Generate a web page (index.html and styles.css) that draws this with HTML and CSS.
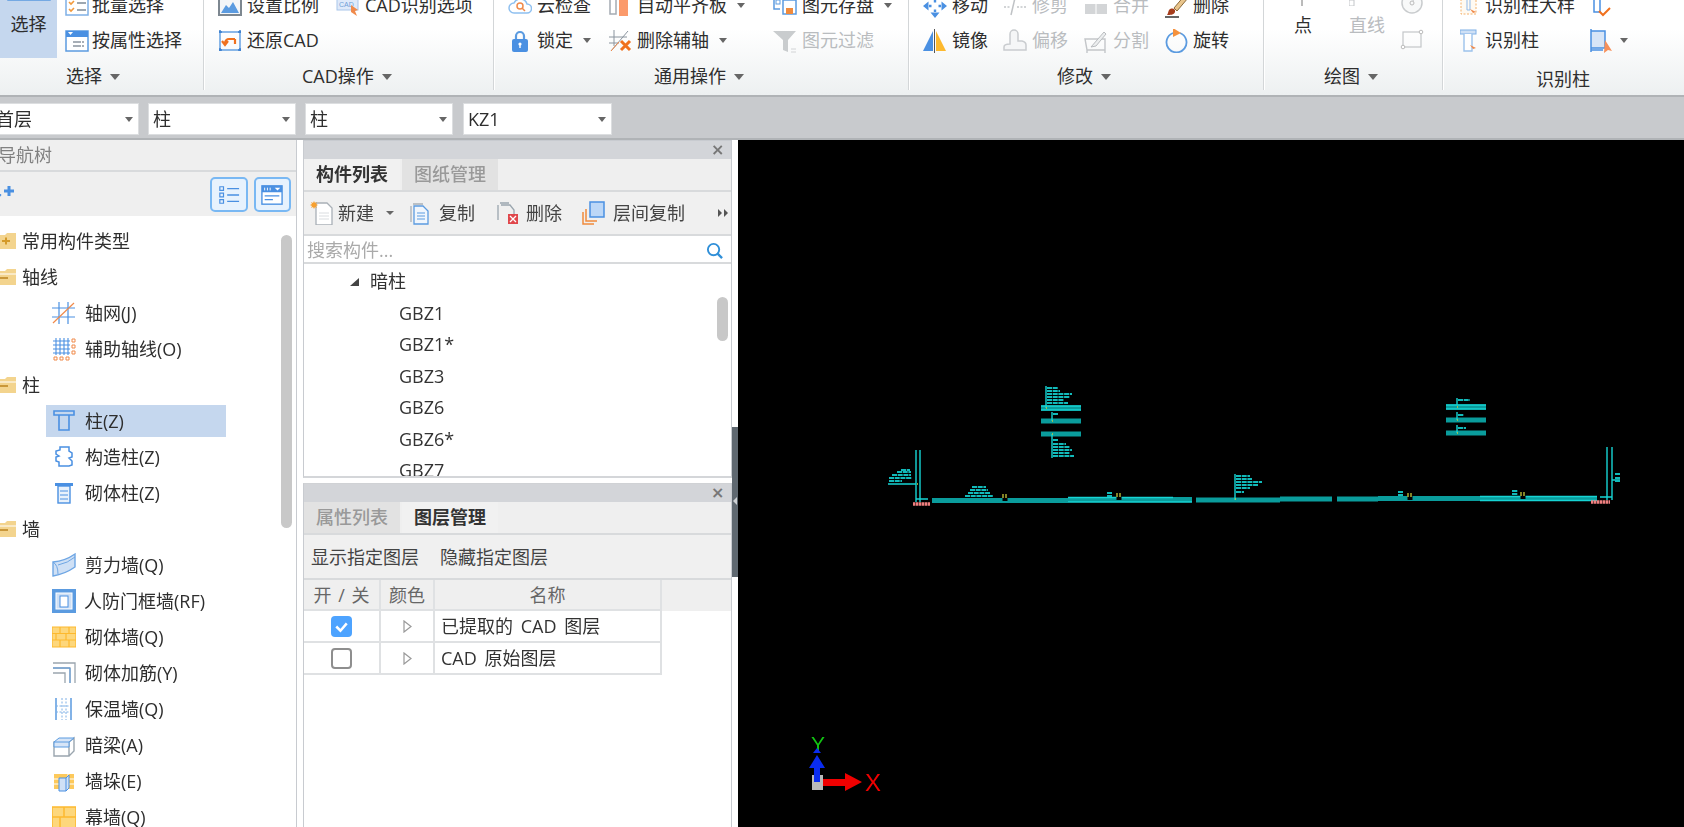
FILE: index.html
```html
<!DOCTYPE html>
<html lang="zh-CN">
<head>
<meta charset="utf-8">
<title>构件绘制</title>
<link rel="stylesheet" href="styles.css">
</head>
<body>
<div class="app">
  <header class="ribbon">
    <div class="ribbon-inner">
      <section class="group g1">
        <div class="body">
          <div class="bigbtn">
            <svg class="bigicon" viewBox="0 0 44 15"><rect x="1" y="-6" width="42" height="18" fill="#fff" stroke="#5b9be0" stroke-width="1.5"/><path d="M6 12V8h8v4M30 12V8" stroke="#f5a04b" stroke-width="2" fill="none"/></svg>
            <span>选择</span>
          </div>
          <div class="stack">
            <div class="item"><svg class="i" viewBox="0 0 24 24"><rect x="1" y="3" width="22" height="18" fill="#fff" stroke="#7fb0e6" stroke-width="1.5"/><path d="M4 8l2 2 3-3M4 15l2 2 3-3" stroke="#f39a3c" stroke-width="1.6" fill="none"/><path d="M12 9h9M12 16h9" stroke="#7d8a96" stroke-width="1.5"/></svg><span>批量选择</span></div>
            <div class="item"><svg class="i" viewBox="0 0 24 24"><rect x="1" y="2" width="22" height="20" fill="#fff" stroke="#5b9be0" stroke-width="1.5"/><rect x="1" y="2" width="22" height="6" fill="#4a90e2"/><path d="M3 3h5l-2.500 3z" fill="#fff"/><path d="M8 13h11M8 17h11" stroke="#8a949e" stroke-width="1.400" stroke-dasharray="8 1"/></svg><span>按属性选择</span></div>
          </div>
        </div>
        <div class="glabel"><span>选择</span><i class="caret"></i></div>
      </section>

      <section class="group g2">
        <div class="body grid2">
          <div class="item"><svg class="i" viewBox="0 0 24 24"><rect x="1" y="3" width="22" height="18" fill="#f4f6f8" stroke="#7d8790" stroke-width="2"/><path d="M3 19l5-8 3 3 4-6 6 11z" fill="#5b9be0"/></svg><span>设置比例</span></div>
          <div class="item cad"><svg class="i" viewBox="0 0 24 24"><rect x="1" y="3" width="21" height="13" fill="#dfeafa" stroke="#a9c6ea"/><text x="3" y="13" class="tiny">CAD</text><path d="M15 11l7 5-3 1 2 5-6-4z" fill="#f08a4b"/></svg><span>CAD识别选项</span></div>
          <div class="item"><svg class="i" viewBox="0 0 24 24"><rect x="2" y="3" width="20" height="18" fill="none" stroke="#5b9be0" stroke-width="1.400"/><path d="M1 3h3M20 3h3M1 21h3M20 21h3M2 1v3M22 1v3M2 19v3M22 19v3" stroke="#3c7fce" stroke-width="1.500"/><path d="M17 10h-6a4 4 0 0 0-4 4v1M4 12l3 4 3-4M17 10v5" stroke="#f0711e" stroke-width="2.200" fill="none"/></svg><span>还原CAD</span></div>
        </div>
        <div class="glabel"><span>CAD操作</span><i class="caret"></i></div>
      </section>

      <section class="group g3">
        <div class="body grid3">
          <div class="item"><svg class="i" viewBox="0 0 24 24"><path d="M6 19a5 5 0 0 1 0-10 7 7 0 0 1 13 1 4.500 4.500 0 0 1 0 9z" fill="#fff" stroke="#8fc0f0" stroke-width="1.500"/><circle cx="12" cy="12" r="3" fill="none" stroke="#f08a4b" stroke-width="1.500"/><path d="M14 14l3 3" stroke="#f08a4b" stroke-width="1.500"/></svg><span>云检查</span></div>
          <div class="item"><svg class="i" viewBox="0 0 24 24"><rect x="2" y="0" width="6" height="20" fill="#fff" stroke="#a4abb2" stroke-width="1.500"/><rect x="11" y="0" width="9" height="22" fill="#fb9a6b"/></svg><span>自动平齐板</span><i class="caret sm"></i></div>
          <div class="item"><svg class="i" viewBox="0 0 24 24"><path d="M1 0v15h6M1 0h10" stroke="#5b9be0" stroke-width="1.500" fill="none"/><rect x="3" y="6" width="4" height="4" fill="none" stroke="#5b9be0"/><rect x="10" y="6" width="13" height="14" fill="#fff" stroke="#5b9be0" stroke-width="1.500"/><rect x="13" y="14" width="7" height="6" fill="#f08a3c"/></svg><span>图元存盘</span><i class="caret sm"></i></div>
          <div class="item"><svg class="i" viewBox="0 0 24 24"><path d="M8 11V7a4 4 0 0 1 8 0v4" fill="none" stroke="#5b9be0" stroke-width="2.200"/><rect x="4" y="10" width="16" height="13" rx="2" fill="#4a90e2"/><circle cx="12" cy="15" r="1.600" fill="#fff"/><path d="M11.300 15h1.400v4h-1.400z" fill="#fff"/></svg><span>锁定</span><i class="caret sm"></i></div>
          <div class="item"><svg class="i" viewBox="0 0 24 24"><path d="M6 1v16M1 8h18M1 14h10M3 22L20 2" stroke="#8a949e" fill="none"/><path d="M3 22l8-9" stroke="#f08a4b"/><path d="M13 12l9 9M22 12l-9 9" stroke="#f0711e" stroke-width="3"/></svg><span>删除辅轴</span><i class="caret sm"></i></div>
          <div class="item off"><svg class="i" viewBox="0 0 24 24"><path d="M0 2h23l-8 9v12l-5-2V11z" fill="#c9ccce"/><path d="M18 20h5M18 23h5" stroke="#d2d4d6"/></svg><span>图元过滤</span></div>
        </div>
        <div class="glabel"><span>通用操作</span><i class="caret"></i></div>
      </section>

      <section class="group g4">
        <div class="body grid4">
          <div class="item"><svg class="i" viewBox="0 0 24 24"><path d="M12 0l4.500 5.500h-9zM12 24l-4.500-5.500h9zM0 12l5.500-4.500v9zM24 12l-5.500 4.500v-9z" fill="#4a90e2"/><path d="M12 6v2.500M12 15.500V18M6 12h2.500M15.500 12H18" stroke="#4a90e2" stroke-width="2.400"/></svg><span>移动</span></div>
          <div class="item off"><svg class="i" viewBox="0 0 24 24"><path d="M1 13h7M14 13h10" stroke="#c3c6c9" stroke-dasharray="2 1.500" stroke-width="1.500"/><path d="M8 21L12 4" stroke="#bfc2c5" stroke-width="1.500"/></svg><span>修剪</span></div>
          <div class="item off"><svg class="i" viewBox="0 0 24 24"><rect x="1" y="10" width="22" height="10" fill="#d3d5d7"/><path d="M12 10v10" stroke="#fff"/><rect x="6" y="2" width="12" height="4" fill="#dcdee0"/></svg><span>合并</span></div>
          <div class="item"><svg class="i" viewBox="0 0 24 24"><path d="M10 14L21 1l3 3-11 13z" fill="#e9c58c" stroke="#8b6a3a"/><path d="M5 16c3-3 7-1 6 2-1 3-5 3-8 3 1-1 1-3 2-5z" fill="#a63d1c"/><path d="M1 23h14" stroke="#333" stroke-width="1.500"/></svg><span>删除</span></div>
          <div class="item"><svg class="i" viewBox="0 0 24 24"><path d="M10 2L0 22h10z" fill="#4a90e2"/><path d="M13 2l10 20H13z" fill="#fdb92e"/><path d="M11.500 0v24" stroke="#555"/></svg><span>镜像</span></div>
          <div class="item off"><svg class="i" viewBox="0 0 24 24"><path d="M7 15V5a4 4 0 0 1 8 0v7h4q4 1 4 4v5H1v-3q0-3 6-3z" fill="#f5f6f7" stroke="#c9cccf" stroke-width="1.500"/></svg><span>偏移</span></div>
          <div class="item off"><svg class="i" viewBox="0 0 24 24"><path d="M1 10h20v11H3zM3 21v3M21 21v3" fill="none" stroke="#c3c6c9" stroke-width="1.400"/><path d="M7 18L20 3l2 2-10 12z" fill="#eceeef" stroke="#b9bcbf"/></svg><span>分割</span></div>
          <div class="item"><svg class="i" viewBox="0 0 24 24"><path d="M9 4a10 10 0 1 0 7 0" fill="none" stroke="#5b9be0" stroke-width="1.800"/><path d="M9 -1l8 5-8 4z" fill="#f5923e"/></svg><span>旋转</span></div>
        </div>
        <div class="glabel"><span>修改</span><i class="caret"></i></div>
      </section>

      <section class="group g5">
        <div class="body grid5">
          <div class="drawcol"><svg class="ticksvg" viewBox="0 0 24 18"><path d="M8 12v6" stroke="#777"/></svg><span>点</span></div>
          <div class="drawcol off"><svg class="ticksvg" viewBox="0 0 24 18"><rect x="0" y="12" width="5" height="6" fill="none" stroke="#c3c6c9"/></svg><span>直线</span></div>
          <div class="drawicons">
            <svg class="i" viewBox="0 0 24 24"><circle cx="12" cy="10" r="10" fill="#f8f9f9" stroke="#c9ccce" stroke-width="1.500"/><circle cx="12" cy="10" r="2" fill="none" stroke="#bbb"/><path d="M13 8l2-5" stroke="#c3c6c9"/></svg>
            <svg class="i" viewBox="0 0 24 24"><rect x="3" y="4" width="18" height="15" fill="none" stroke="#c3c6c9" stroke-width="1.200"/><circle cx="21" cy="4" r="1.800" fill="#fff" stroke="#bbb"/><circle cx="3" cy="19" r="1.800" fill="#fff" stroke="#bbb"/></svg>
          </div>
        </div>
        <div class="glabel"><span>绘图</span><i class="caret"></i></div>
      </section>

      <section class="group g6">
        <div class="body grid6">
          <div class="item"><svg class="i" viewBox="0 0 24 24"><rect x="1" y="0" width="15" height="20" fill="#fffaf2" stroke="#f4b26c" stroke-dasharray="2 1.500"/><path d="M5 3h7M7 3v13h3V3" stroke="#8fb9ea" fill="none"/><path d="M10 15l6 3-3 1z" fill="#f08a4b"/></svg><span>识别柱大样</span></div>
          <div class="item"><svg class="i" viewBox="0 0 24 24"><path d="M1 0v3h14V0M4 3v15h6V3" fill="none" stroke="#4a90e2" stroke-width="1.500"/><path d="M9 17l4 4 7-7" fill="none" stroke="#f0711e" stroke-width="2"/></svg></div>
          <div class="item"><svg class="i" viewBox="0 0 24 24"><rect x="0" y="1" width="16" height="4" fill="#cfe0f5" stroke="#7fb0e6"/><path d="M4 5v17h8V5" fill="#fff" stroke="#9cc2ec" stroke-width="1.400"/><path d="M10 16l6 3-3 1z" fill="#f08a4b"/></svg><span>识别柱</span></div>
          <div class="item"><svg class="i" viewBox="0 0 24 24"><path d="M1 0v23M1 2h14v17H1M1 21h12" fill="#d7e5f7" stroke="#4a90e2" stroke-width="1.500"/><path d="M15 11l7 11-4-1-4 3z" fill="#f7905a"/></svg><i class="caret sm"></i></div>
        </div>
        <div class="glabel"><span>识别柱</span></div>
      </section>
    </div>
  </header>

  <div class="combos">
    <div class="combo first"><span>首层</span><i class="caret sm"></i></div>
    <div class="combo"><span>柱</span><i class="caret sm"></i></div>
    <div class="combo"><span>柱</span><i class="caret sm"></i></div>
    <div class="combo"><span>KZ1</span><i class="caret sm"></i></div>
  </div>

  <main class="main">
    <aside class="nav">
      <div class="nav-title"><span>导航树</span></div>
      <div class="nav-tools">
        <svg class="spark" viewBox="0 0 22 16"><path d="M6 6l3.500 4L6 14l-3.500-4z" fill="#4a90e2"/><path d="M17 1v10M12 6h10" stroke="#4a90e2" stroke-width="3"/></svg>
        <div class="navbtn"><svg class="navic" viewBox="0 0 24 24"><path d="M2 3h4v4H2zM2 10h4v4H2zM2 17h4v4H2z" fill="none" stroke="#4a90e2" stroke-width="1.300"/><path d="M10 5h13M10 12h13M10 19h13" stroke="#4a90e2" stroke-width="1.400"/></svg></div>
        <div class="navbtn"><svg class="navic" viewBox="0 0 24 24"><rect x="1" y="2" width="22" height="20" fill="#fff" stroke="#4a90e2" stroke-width="1.500"/><rect x="1" y="2" width="22" height="7" fill="#4a90e2"/><path d="M4 4v3M7 4v3M10 4v3" stroke="#fff"/><path d="M15 4h6l-3 3z" fill="#fff"/><path d="M4 13h16M4 17h9" stroke="#4a90e2" stroke-width="1.500"/></svg></div>
      </div>
      <div class="tree">
        <div class="folder"><svg class="fold" viewBox="0 0 18 18"><path d="M0 3h7l2-2h9v16H0z" fill="#f3d48e"/><path d="M4 9h8M8 5.500v7" stroke="#d49a2a" stroke-width="2"/></svg><span>常用构件类型</span></div>
        <div class="folder"><svg class="fold" viewBox="0 0 18 18"><path d="M0 3h7l2-2h9v16H0z" fill="#f3d48e"/><path d="M0 6h18" stroke="#fff"/><path d="M2 10h8" stroke="#c9973a" stroke-width="2"/></svg><span>轴线</span></div>
        <div class="leaf"><svg class="i" viewBox="0 0 24 24"><path d="M7 1v22M16 1v22M0 7h23M0 16h23" stroke="#4a90e2" stroke-width="1.200"/><path d="M1 22L22 2" stroke="#f08a4b" stroke-width="1.200"/></svg><span>轴网(J)</span></div>
        <div class="leaf"><svg class="i" viewBox="0 0 24 24"><path d="M4 1v17M8 1v17M12 1v17M16 1v17M1 4h17M1 8h17M1 12h17M1 16h17" stroke="#4a90e2" stroke-width="1.100"/><path d="M20 2h3v3h-3zM20 8h3v3h-3zM20 14h3v3h-3zM2 20h3v3H2zM8 20h3v3H8zM14 20h3v3h-3z" fill="none" stroke="#f08a4b"/></svg><span>辅助轴线(O)</span></div>
        <div class="folder"><svg class="fold" viewBox="0 0 18 18"><path d="M0 3h7l2-2h9v16H0z" fill="#f3d48e"/><path d="M0 6h18" stroke="#fff"/><path d="M2 10h8" stroke="#c9973a" stroke-width="2"/></svg><span>柱</span></div>
        <div class="leaf on"><svg class="i" viewBox="0 0 24 24"><path d="M2 2h20v4H2zM7 6v15h10V6" fill="none" stroke="#4a90e2" stroke-width="1.600"/></svg><span>柱(Z)</span></div>
        <div class="leaf"><svg class="i" viewBox="0 0 24 24"><path d="M8 2h9v4l3 2v4l-3 1 3 3v4l-3 1H7v-4L4 16v-4l3-1-3-2V6l4-1z" fill="#fff" stroke="#4a90e2" stroke-width="1.500"/></svg><span>构造柱(Z)</span></div>
        <div class="leaf"><svg class="i" viewBox="0 0 24 24"><path d="M3 2h18v3H3z" fill="#4a90e2"/><rect x="6" y="5" width="12" height="17" fill="#e8f1fb" stroke="#4a90e2" stroke-width="1.400"/><path d="M8 10h8M8 14h8M8 18h8" stroke="#4a90e2"/></svg><span>砌体柱(Z)</span></div>
        <div class="folder"><svg class="fold" viewBox="0 0 18 18"><path d="M0 3h7l2-2h9v16H0z" fill="#f3d48e"/><path d="M0 6h18" stroke="#fff"/><path d="M2 10h8" stroke="#c9973a" stroke-width="2"/></svg><span>墙</span></div>
        <div class="leaf"><svg class="i" viewBox="0 0 24 24"><path d="M1 9q12-1 22-8v13Q13 21 1 23z" fill="#cfe0f5" stroke="#6ea6e4" stroke-width="1.400"/><path d="M1 9q5 3 5 12M6 12q10-2 17-8" fill="none" stroke="#6ea6e4"/></svg><span>剪力墙(Q)</span></div>
        <div class="leaf"><svg class="i" viewBox="0 0 24 24"><rect x="0" y="0" width="24" height="24" fill="#5b9be0"/><rect x="4" y="4" width="16" height="16" fill="#cfe0f5" stroke="#fff"/><rect x="8" y="7" width="8" height="11" fill="#fff" stroke="#4a90e2"/></svg><span class="tight">人防门框墙(RF)</span></div>
        <div class="leaf"><svg class="i" viewBox="0 0 24 24"><rect x="0" y="2" width="24" height="20" fill="#fdd77c"/><path d="M0 8.500h24M0 15h24M8 2v6.500M17 2v6.500M4 8.500V15M14 8.500V15M8 15v7M17 15v7M0 2h24v20H0z" stroke="#fdb92e" stroke-width="1.200" fill="none"/></svg><span>砌体墙(Q)</span></div>
        <div class="leaf"><svg class="i" viewBox="0 0 24 24"><path d="M1 2h22v20M1 7h17v15M1 12h12v10" fill="none" stroke="#9aa5ae" stroke-width="1.300"/><path d="M1 7h17v15" fill="none" stroke="#5b9be0"/></svg><span>砌体加筋(Y)</span></div>
        <div class="leaf"><svg class="i" viewBox="0 0 24 24"><path d="M4 1v22M19 1v22" stroke="#5b9be0" stroke-width="1.500"/><path d="M10 1v22M14 1v22M4 9h15M4 15h15" stroke="#7fb0e6" stroke-dasharray="2 1.500"/></svg><span>保温墙(Q)</span></div>
        <div class="leaf"><svg class="i" viewBox="0 0 24 24"><path d="M2 9h15v14H2zM17 9l5-4v13l-5 5" fill="#fff" stroke="#9aa5ae" stroke-width="1.400"/><path d="M2 9l5-4h15l-5 4zM2 9v5h15V9" fill="#d7e5f7" stroke="#5b9be0"/></svg><span>暗梁(A)</span></div>
        <div class="leaf"><svg class="i" viewBox="0 0 24 24"><rect x="2" y="5" width="20" height="15" fill="#fdc95b"/><path d="M2 10h20M2 15h20M16 5v15" stroke="#fff"/><path d="M7 9h7v13H7zM14 9l3-3v13l-3 3" fill="#cfe0f5" stroke="#4a90e2"/></svg><span>墙垛(E)</span></div>
        <div class="leaf"><svg class="i" viewBox="0 0 24 24"><rect x="0" y="2" width="24" height="22" fill="#fdd77c" stroke="#fdb92e" stroke-width="1.500"/><path d="M0 12h24M12 2v10M8 12v12" stroke="#fdb92e" stroke-width="1.500"/></svg><span>幕墙(Q)</span></div>
      </div>
      <div class="vthumb tree-thumb"></div>
    </aside>

    <div class="mid">
      <section class="panel top">
        <div class="phead"><span class="close">×</span></div>
        <div class="tabs"><div class="tab act">构件列表</div><div class="tab">图纸管理</div></div>
        <div class="tbar">
          <div class="tool t-new"><svg class="i" viewBox="0 0 24 24"><path d="M6 2h11l5 5v17H6z" fill="#fff" stroke="#a9b0b7" stroke-width="1.300"/><path d="M9 12h10M9 15h10M9 18h10" stroke="#dadde0"/><path d="M4 0l1 2 2-1-1 2 2 1-2 1 1 2-2-1-1 2-1-2-2 1 1-2-2-1 2-1-1-2 2 1z" fill="#f7a02f"/></svg><span>新建</span><i class="caret xs"></i></div>
          <div class="tool t-copy"><svg class="i" viewBox="0 0 24 24"><path d="M5 3h10M3 5v16" stroke="#a9b0b7" fill="none" stroke-width="1.300"/><path d="M6 5h9l5 5v13H6z" fill="#f0f6fd" stroke="#5b9be0" stroke-width="1.300"/><path d="M9 12h8M9 15h8M9 18h8" stroke="#5b9be0"/></svg><span>复制</span></div>
          <div class="tool t-del"><svg class="i" viewBox="0 0 24 24"><path d="M5 2h9M3 4v15" stroke="#9aa5ae" fill="none" stroke-width="1.300"/><path d="M6 4h9l4 5v8" fill="none" stroke="#9aa5ae" stroke-width="1.300"/><rect x="13" y="13" width="10" height="10" fill="#e0474c"/><path d="M15 15l6 6M21 15l-6 6" stroke="#fff" stroke-width="1.300"/></svg><span>删除</span></div>
          <div class="tool t-layer"><svg class="i" viewBox="0 0 24 24"><path d="M1 11v12h11M4 8v12h11" fill="none" stroke="#f08a3c" stroke-width="1.500"/><rect x="8" y="1" width="14" height="15" fill="#bcd7f7" stroke="#4a90e2" stroke-width="1.500"/></svg><span>层间复制</span></div>
          <svg class="more" viewBox="0 0 12 10"><path d="M1 1l4 4-4 4zM7 1l4 4-4 4z" fill="#555"/></svg>
        </div>
        <div class="search"><span>搜索构件...</span><svg class="mag" viewBox="0 0 18 18"><circle cx="8" cy="8" r="6" fill="none" stroke="#2f8fd8" stroke-width="2"/><path d="M12 12l5 5" stroke="#2f8fd8" stroke-width="2.500"/></svg></div>
        <div class="list">
          <div class="lrow head"><svg class="tri" viewBox="0 0 9 8"><path d="M9 0v8H0z" fill="#444"/></svg><span>暗柱</span></div>
          <div class="lrow">GBZ1</div>
          <div class="lrow">GBZ1*</div>
          <div class="lrow">GBZ3</div>
          <div class="lrow">GBZ6</div>
          <div class="lrow">GBZ6*</div>
          <div class="lrow">GBZ7</div>
          <div class="vthumb list-thumb"></div>
        </div>
      </section>

      <section class="panel bottom">
        <div class="phead"><span class="close">×</span></div>
        <div class="tabs"><div class="tab">属性列表</div><div class="tab act">图层管理</div></div>
        <div class="tbar links"><span>显示指定图层</span><span>隐藏指定图层</span></div>
        <div class="table">
          <div class="tr th"><div class="c1">开 / 关</div><div class="c2">颜色</div><div class="c3">名称</div></div>
          <div class="tr"><div class="c1"><span class="chk yes"><svg viewBox="0 0 20 20"><path d="M5 10l4 4 6-7" fill="none" stroke="#fff" stroke-width="2.400"/></svg></span></div><div class="c2"><svg class="play" viewBox="0 0 9 13"><path d="M1 1l7 5.500-7 5.500z" fill="#fff" stroke="#999" stroke-width="1.200"/></svg></div><div class="c3 name">已提取的 CAD 图层</div></div>
          <div class="tr"><div class="c1"><span class="chk"></span></div><div class="c2"><svg class="play" viewBox="0 0 9 13"><path d="M1 1l7 5.500-7 5.500z" fill="#fff" stroke="#999" stroke-width="1.200"/></svg></div><div class="c3 name">CAD 原始图层</div></div>
        </div>
      </section>
    </div>

    <div class="gutter"><div class="splitter"><i></i></div></div>

    <div class="canvas">
      <svg class="cad-draw" viewBox="738 140 946 687">
        <g class="thick">
          <path d="M932 500.500H1068M1068 499.500H1192M1196 500H1280M1280 499H1332M1337 499H1378M1378 498.500H1480M1480 498.500H1597"/>
          <path d="M1041 408H1081M1041 421H1081M1041 434H1081M1446 407H1486M1446 420H1486M1446 433H1486"/>
        </g>
        <g class="thin">
          <path d="M916 450V502M920 450V502M916 484H888M916 499H928M1068 497.500H1173M1068 502H1192"/>
          <path d="M1480 496.500H1597M1480 500.500H1597M1600 497H1612M1607 447V500M1612 447V500M1612 480H1620"/>
          <path d="M1041 406H1081M1041 410H1081M1446 405H1486M1446 409H1486"/>
          <path d="M1046 386V408M1052 412V421M1052 434V458M1235 474V500M1457 398V405M1457 412V420M1457 425V433"/>
        </g>
        <g class="blocks">
          <path d="M889 481H902M889 478H912M892 475H911M897 472H911M901 470H910"/>
          <path d="M965 496H993M968 493H990M970 490H988M972 487H986"/>
          <path d="M1107 496H1112M1107 493H1112M1398 495H1403M1398 492H1403M1512 494H1518M1512 491H1518"/>
          <path d="M1047 388H1058M1047 391H1060M1047 394H1072M1047 397H1070M1047 400H1064M1047 403H1068"/>
          <path d="M1053 440H1058M1053 444H1066M1053 447H1070M1053 450H1072M1053 453H1070M1053 456H1074"/>
          <path d="M1236 476H1250M1236 479H1252M1236 482H1262M1236 485H1258M1236 488H1250M1236 492H1244"/>
          <path d="M1458 400H1470M1458 415H1464M1458 428H1466M1615 474H1620M1615 478H1620M1615 481H1620M1053 414H1058"/>
        </g>
        <path class="gaps" d="M1005 497v4M1119 496v4M1410 496v4M1523 495v4"/>
        <path class="gold" d="M1003 494v4M1006 494v4M1117 493v4M1120 493v4M1408 493v4M1411 493v4M1521 492v4M1524 492v4M917 484h1M1046 408h1M1052 421h1M1052 434h1M1235 499h1M1457 407h1M1457 420h1M1457 433h1"/>
        <path class="redtag" d="M913 504H930M1591 502H1610"/>
      </svg>
      <svg class="axes" viewBox="738 140 946 687">
        <rect class="gray-sq" x="812" y="775" width="11" height="15"/>
        <text class="ax-y" x="811" y="751">Y</text>
        <path class="ax-blue" d="M817 748l-4 5h8zM817 755l-8 13 5 0v14h6v-14l5 0z"/>
        <path class="ax-red" d="M823 779h22v-6l17 9-17 9v-5h-22z"/>
        <text class="ax-x" x="865" y="791">X</text>
      </svg>
    </div>
  </main>
</div>
</body>
</html>
```
FILE: styles.css
```css
* { box-sizing: border-box; }
html, body { margin: 0; height: 100%; background: #fff; overflow: hidden; }
body {
  font-family: "Open Sans", "Noto Sans CJK SC", sans-serif;
  font-size: 18px;
  color: #2e2e2e;
}
.app {
  width: 1684px;
  height: 827px;
  overflow: hidden;
  display: flex;
  flex-direction: column;
  filter: blur(0.4px);
}
svg { display: block; flex: none; overflow: hidden; }
.i { width: 24px; height: 24px; }

/* ribbon */
.ribbon {
  height: 97px;
  flex: none;
  overflow: hidden;
  background: linear-gradient(#fff 0, #fff 30%, #edf0f1 100%);
  border-bottom: 2px solid #b0b3b6;
}
.ribbon-inner { display: flex; margin-top: -12px; align-items: flex-start; }
.group { height: 102px; flex: none; border-right: 1px solid #d3d6d8; box-shadow: 1px 0 0 #fff; }
.g1 { width: 204px; }
.g2 { width: 290px; padding-left: 14px; }
.g3 { width: 415px; padding-left: 14px; }
.g4 { width: 355px; padding-left: 14px; }
.g5 { width: 179px; padding-left: 30px; }
.g6 { width: 241px; padding-left: 17px; border-right: 0; }
.body { height: 70px; }
.g1 .body { display: flex; gap: 8px; }
.bigbtn { width: 57px; height: 70px; background: #c5d7ee; display: flex; flex-direction: column; align-items: center; }
.bigicon { width: 44px; height: 15px; }
.bigbtn span { line-height: 36px; height: 36px; margin-top: 3px; }
.stack { display: flex; flex-direction: column; }
.stack .item { gap: 3px; }
.item { height: 35px; display: flex; align-items: center; gap: 5px; line-height: 35px; white-space: nowrap; }
.off { color: #b9bcbf; }
.grid2 { display: grid; grid-template-columns: 118px 1fr; }
.tiny { font-family: "Liberation Sans", sans-serif; font-size: 7px; fill: #6f9fd8; }
.grid3 { display: grid; grid-template-columns: 100px 165px 1fr; }
.grid4 { display: grid; grid-template-columns: 80px 81px 80px 1fr; }
.grid5 { display: grid; grid-template-columns: 55px 53px 30px; }
.grid6 { display: grid; grid-template-columns: 130px 1fr; }
.grid6 .item { gap: 1px; }
.drawcol { display: flex; flex-direction: column; }
.ticksvg { width: 24px; height: 18px; }
.drawcol span { line-height: 38px; }
.drawicons { display: flex; flex-direction: column; gap: 11px; margin-left: -2px; margin-top: 5px; }
.glabel { height: 37px; display: flex; align-items: center; gap: 8px; line-height: 37px; }
.g1 .glabel { padding-left: 66px; }
.g2 .glabel { padding-left: 84px; }
.g3 .glabel { padding-left: 146px; }
.g4 .glabel { padding-left: 134px; }
.g5 .glabel { padding-left: 30px; }
.g6 .glabel { padding-left: 76px; padding-top: 6px; }
.caret { display: block; flex: none; width: 0; height: 0; border-left: 5px solid transparent; border-right: 5px solid transparent; border-top: 6px solid #666; }
.caret.sm { border-left-width: 4.500px; border-right-width: 4.500px; border-top-width: 5px; margin-left: 5px; }
.caret.xs { border-left-width: 4px; border-right-width: 4px; border-top-width: 4px; margin-left: 8px; }

/* selector strip */
.combos {
  height: 43px;
  flex: none;
  background: #c8cacd;
  border-bottom: 2px solid #b0b3b6;
  padding-top: 6px;
  display: flex;
  gap: 9px;
}
.combo {
  width: 148px;
  height: 32px;
  background: #fff;
  border: 1px solid #dcdee0;
  display: flex;
  align-items: center;
  justify-content: space-between;
  padding: 0 5px 0 4px;
  line-height: 30px;
}
.combo.first { margin-left: -9px; }
.combo:last-child { margin-left: 1px; width: 149px; }

/* main */
.main { flex: 1; display: flex; min-height: 0; }
.nav { width: 297px; flex: none; position: relative; border-right: 1px solid #c8cbd0; display: flex; flex-direction: column; }
.nav-title { height: 32px; flex: none; background: #efefef; border-bottom: 2px solid #d8dadc; line-height: 30px; color: #808080; }
.nav-title span { display: block; margin-left: -2px; }
.nav-tools { height: 44px; flex: none; background: #efefef; display: flex; align-items: flex-start; gap: 6px; padding: 5px 5px 0 0; }
.spark { width: 22px; height: 16px; margin: 8px auto 0 -8px; }
.navbtn { width: 37.500px; height: 35px; border: 2px solid #79b8f3; border-radius: 5px; background: #e7f2fd; display: flex; align-items: center; justify-content: center; }
.navic { width: 22px; height: 22px; }
.tree { flex: 1; min-height: 0; overflow: hidden; padding-top: 9px; }
.folder { height: 32px; margin-bottom: 4px; display: flex; align-items: center; gap: 6px; line-height: 32px; margin-left: -2px; white-space: nowrap; }
.fold { width: 18px; height: 18px; }
.leaf { height: 32px; margin-bottom: 4px; margin-left: 46px; width: 180px; padding-left: 6px; display: flex; align-items: center; gap: 9px; line-height: 32px; white-space: nowrap; }
.leaf.on { background: #c5d7ee; }
.leaf .tight { margin-left: -1px; }
.vthumb { position: absolute; width: 11px; background: #c8c8c8; border-radius: 6px; }
.tree-thumb { left: 281px; top: 95px; height: 293px; }

.mid { width: 435px; flex: none; padding-left: 6px; display: flex; flex-direction: column; }
.panel { border-left: 1px solid #c8cbd0; border-right: 1px solid #c8cbd0; display: flex; flex-direction: column; }
.panel.top { height: 338px; border-top: 1px solid #c8cbd0; border-bottom: 2px solid #d4d6d9; }
.panel.bottom { flex: 1; margin-top: 5px; border-top: 1px solid #d0d2d5; }
.phead { height: 18px; flex: none; background: #d3d5d9; display: flex; justify-content: flex-end; align-items: center; padding-right: 0; }
.close { font-family: "DejaVu Sans", sans-serif; font-size: 16px; font-weight: 700; color: #777; line-height: 18px; width: 20px; }
.tabs { height: 33px; flex: none; display: flex; gap: 2px; background: #efefef; border-bottom: 2px solid #d8dadc; }
.tab { width: 96px; background: #e2e2e2; color: #999; text-align: center; line-height: 31px; font-weight: 500; }
.tab.act { background: #f1f1f1; color: #333; font-weight: 700; }
.tbar { height: 44px; flex: none; background: #f0f0f0; border-bottom: 2px solid #d8dadc; display: flex; align-items: center; }
.tool { display: flex; align-items: center; gap: 7px; color: #444; line-height: 30px; white-space: nowrap; }
.t-new { margin-left: 6px; gap: 4px; }
.t-copy { margin-left: 14px; }
.t-del { margin-left: 20px; }
.t-layer { margin-left: 20px; }
.more { width: 12px; height: 10px; margin-left: auto; margin-right: 2px; }
.search { height: 28px; flex: none; border-bottom: 2px solid #d8dadc; display: flex; align-items: center; justify-content: space-between; padding: 2px 8px 0 3px; color: #aaa; line-height: 26px; }
.mag { width: 17px; height: 17px; }
.list { flex: 1; min-height: 0; overflow: hidden; position: relative; padding-top: 2px; }
.lrow { height: 31.500px; line-height: 31.500px; padding-left: 95px; white-space: nowrap; color: #333; }
.lrow.head { padding-left: 46px; display: flex; align-items: center; gap: 11px; }
.tri { width: 9px; height: 8px; }
.list-thumb { right: 3px; top: 33px; height: 44px; }

.links { height: 45px; gap: 21px; padding-left: 7px; color: #444; padding-bottom: 2px; }
.table { display: flex; flex-direction: column; }
.tr { display: flex; height: 32px; }
.tr > div { border-right: 2px solid #dfe1e3; border-bottom: 2px solid #dfe1e3; display: flex; align-items: center; justify-content: center; line-height: 30px; }
.th { background: #efefef; height: 31px; color: #666; word-spacing: 2px; }
.c1 { width: 77px; }
.c2 { width: 54px; }
.c3 { width: 227px; }
.name { justify-content: flex-start !important; padding-left: 6px; color: #333; word-spacing: 3px; }
.chk { width: 21px; height: 21px; border: 2px solid #8e8e8e; border-radius: 4px; background: #fff; display: block; }
.chk.yes { border: 0; background: #4da3ff; }
.chk svg { width: 21px; height: 21px; }
.play { width: 9px; height: 13px; }

.gutter { width: 6px; flex: none; background: #fff; }
.splitter { width: 6px; height: 150px; margin-top: 287px; background: #5f6870; position: relative; }
.splitter i { position: absolute; left: 1px; top: 70px; border: 4px solid transparent; border-right: 4px solid #cfd2d5; border-left: 0; }

/* cad canvas */
.canvas { flex: 1; background: #000; position: relative; min-width: 0; }
.cad-draw, .axes { position: absolute; inset: 0; width: 946px; height: 687px; }
.cad-draw { filter: blur(0.6px); }
.thin path { fill: none; stroke: #16d4d4; stroke-width: 1.400; }
.thick path { fill: none; stroke: #0a9c9c; stroke-width: 5; }
.blocks path { fill: none; stroke: #12baba; stroke-width: 2; stroke-dasharray: 5 0.700; }
.gaps { fill: none; stroke: #000; stroke-width: 5; }
.gold { fill: none; stroke: #c8c83a; stroke-width: 1.300; }
.redtag { fill: none; stroke: #f08080; stroke-width: 3.500; stroke-dasharray: 2.500 0.500; }
.gray-sq { fill: #b9b9b9; }
.ax-y { font-family: "Liberation Sans", sans-serif; font-size: 21px; fill: #12c412; }
.ax-blue { fill: #0a2cf0; }
.ax-red { fill: #f00000; }
.ax-x { font-family: "Liberation Sans", sans-serif; font-size: 24px; fill: #f00000; }
```
